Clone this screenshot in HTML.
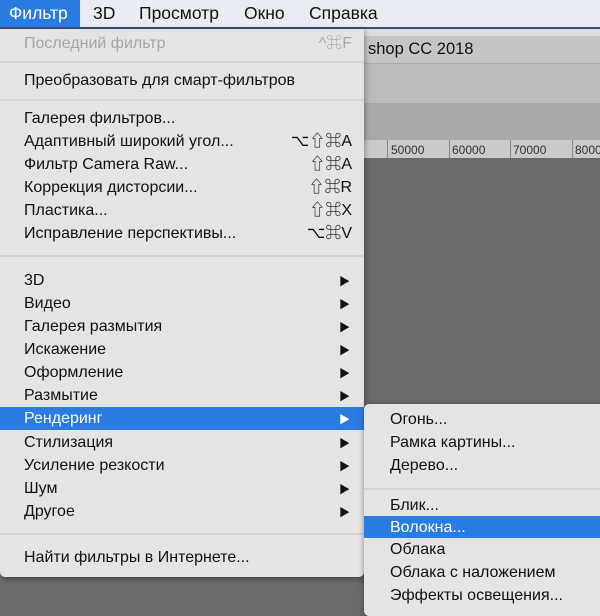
<!DOCTYPE html>
<html><head><meta charset="utf-8"><style>
*{margin:0;padding:0;box-sizing:border-box}
body{width:600px;height:611px;overflow:hidden;position:relative;background:#6a6a6a;font-family:"Liberation Sans","Noto Sans CJK SC",sans-serif;font-size:16px;color:#111}
.abs{position:absolute}
.bar{left:0;top:0;width:600px;height:27px;background:#e9ecf3}
.bar span{position:absolute;top:3px;font-size:17.5px}
.item{position:absolute;left:24px;height:23px;line-height:23px;white-space:nowrap}
.sc{position:absolute;right:0;text-align:right}
.arr{position:absolute;left:339px;font-size:11px}
.sep{position:absolute;height:2px;background:#d2d2d2}
</style></head><body>
<div class="abs" style="left:0;top:27px;width:600px;height:2px;background:#3a4a78"></div>
<div class="abs" style="left:0;top:29px;width:600px;height:7px;background:#dcdcdc"></div>
<div class="abs" style="left:0;top:36px;width:600px;height:27px;background:#c5c5c5"></div>
<div class="abs" style="left:368px;top:40px;font-size:16.5px;color:#111">shop CC 2018</div>
<div class="abs" style="left:0;top:63px;width:600px;height:40px;background:#bcbcbc;border-top:1px solid #aaa"></div>
<div class="abs" style="left:0;top:103px;width:600px;height:37px;background:#a9a9a9"></div>
<div class="abs" style="left:0;top:140px;width:600px;height:18px;background:#cacaca;font-size:12px;color:#333">
<span class="abs" style="left:391px;top:3px">50000</span><span class="abs" style="left:452px;top:3px">60000</span><span class="abs" style="left:513px;top:3px">70000</span><span class="abs" style="left:575px;top:3px">8000</span>
<span class="abs" style="left:387px;top:0;width:1px;height:18px;background:#888"></span><span class="abs" style="left:449px;top:0;width:1px;height:18px;background:#888"></span><span class="abs" style="left:510px;top:0;width:1px;height:18px;background:#888"></span><span class="abs" style="left:572px;top:0;width:1px;height:18px;background:#888"></span>
</div>
<div class="abs bar">
<div class="abs" style="left:0;top:0;width:80px;height:27px;background:#2a7be4"></div>
<span style="left:9px;color:#fff">Фильтр</span><span style="left:93px">3D</span><span style="left:139px">Просмотр</span><span style="left:244px">Окно</span><span style="left:309px">Справка</span>
</div>
<div class="abs" style="left:0;top:29px;width:364px;height:548px;background:#e4e4e4;border-radius:0 0 5px 5px;box-shadow:1px 2px 6px rgba(0,0,0,.35)">
<div class="abs" style="left:0;top:378px;width:364px;height:23px;background:#2a7be4"></div>
</div>
<div style="position:absolute;left:0;top:0;width:364px">
<div class="item" style="top:32px;color:#a5a5a5;width:328px">Последний фильтр<span class="sc">^⌘F</span></div>
<div class="sep" style="left:0;top:61px;width:364px"></div>
<div class="item" style="top:69px">Преобразовать для смарт-фильтров</div>
<div class="sep" style="left:0;top:99px;width:364px"></div>
<div class="item" style="top:107px">Галерея фильтров...</div>
<div class="item" style="top:130px;width:328px">Адаптивный широкий угол...<span class="sc">⌥⇧⌘A</span></div>
<div class="item" style="top:153px;width:328px">Фильтр Camera Raw...<span class="sc">⇧⌘A</span></div>
<div class="item" style="top:176px;width:328px">Коррекция дисторсии...<span class="sc">⇧⌘R</span></div>
<div class="item" style="top:199px;width:328px">Пластика...<span class="sc">⇧⌘X</span></div>
<div class="item" style="top:222px;width:328px">Исправление перспективы...<span class="sc">⌥⌘V</span></div>
<div class="sep" style="left:0;top:255px;width:364px"></div>
<div class="item" style="top:269px">3D</div>
<div class="item" style="top:292px">Видео</div>
<div class="item" style="top:315px">Галерея размытия</div>
<div class="item" style="top:338px">Искажение</div>
<div class="item" style="top:361px">Оформление</div>
<div class="item" style="top:384px">Размытие</div>
<div class="item" style="top:407px;color:#fff">Рендеринг</div>
<div class="item" style="top:431px">Стилизация</div>
<div class="item" style="top:454px">Усиление резкости</div>
<div class="item" style="top:477px">Шум</div>
<div class="item" style="top:500px">Другое</div>
<div class="sep" style="left:0;top:533px;width:364px"></div>
<div class="item" style="top:546px">Найти фильтры в Интернете...</div>
<div class="arr" style="top:273px">▶</div><div class="arr" style="top:296px">▶</div><div class="arr" style="top:319px">▶</div><div class="arr" style="top:342px">▶</div><div class="arr" style="top:365px">▶</div><div class="arr" style="top:388px">▶</div><div class="arr" style="top:411px;color:#fff">▶</div><div class="arr" style="top:435px">▶</div><div class="arr" style="top:458px">▶</div><div class="arr" style="top:481px">▶</div><div class="arr" style="top:504px">▶</div>
</div>
<div class="abs" style="left:364px;top:404px;width:240px;height:212px;background:#e4e4e4;border-radius:5px;box-shadow:0 1px 6px rgba(0,0,0,.4)">
<div class="abs" style="left:0;top:112px;width:240px;height:22px;background:#2a7be4"></div>
<div class="sep" style="left:0;top:84px;width:240px"></div>
<div class="item" style="left:26px;top:4px">Огонь...</div>
<div class="item" style="left:26px;top:27px">Рамка картины...</div>
<div class="item" style="left:26px;top:50px">Дерево...</div>
<div class="item" style="left:26px;top:90px">Блик...</div>
<div class="item" style="left:26px;top:112px;color:#fff">Волокна...</div>
<div class="item" style="left:26px;top:134px">Облака</div>
<div class="item" style="left:26px;top:157px">Облака с наложением</div>
<div class="item" style="left:26px;top:180px">Эффекты освещения...</div>
</div>
</body></html>
